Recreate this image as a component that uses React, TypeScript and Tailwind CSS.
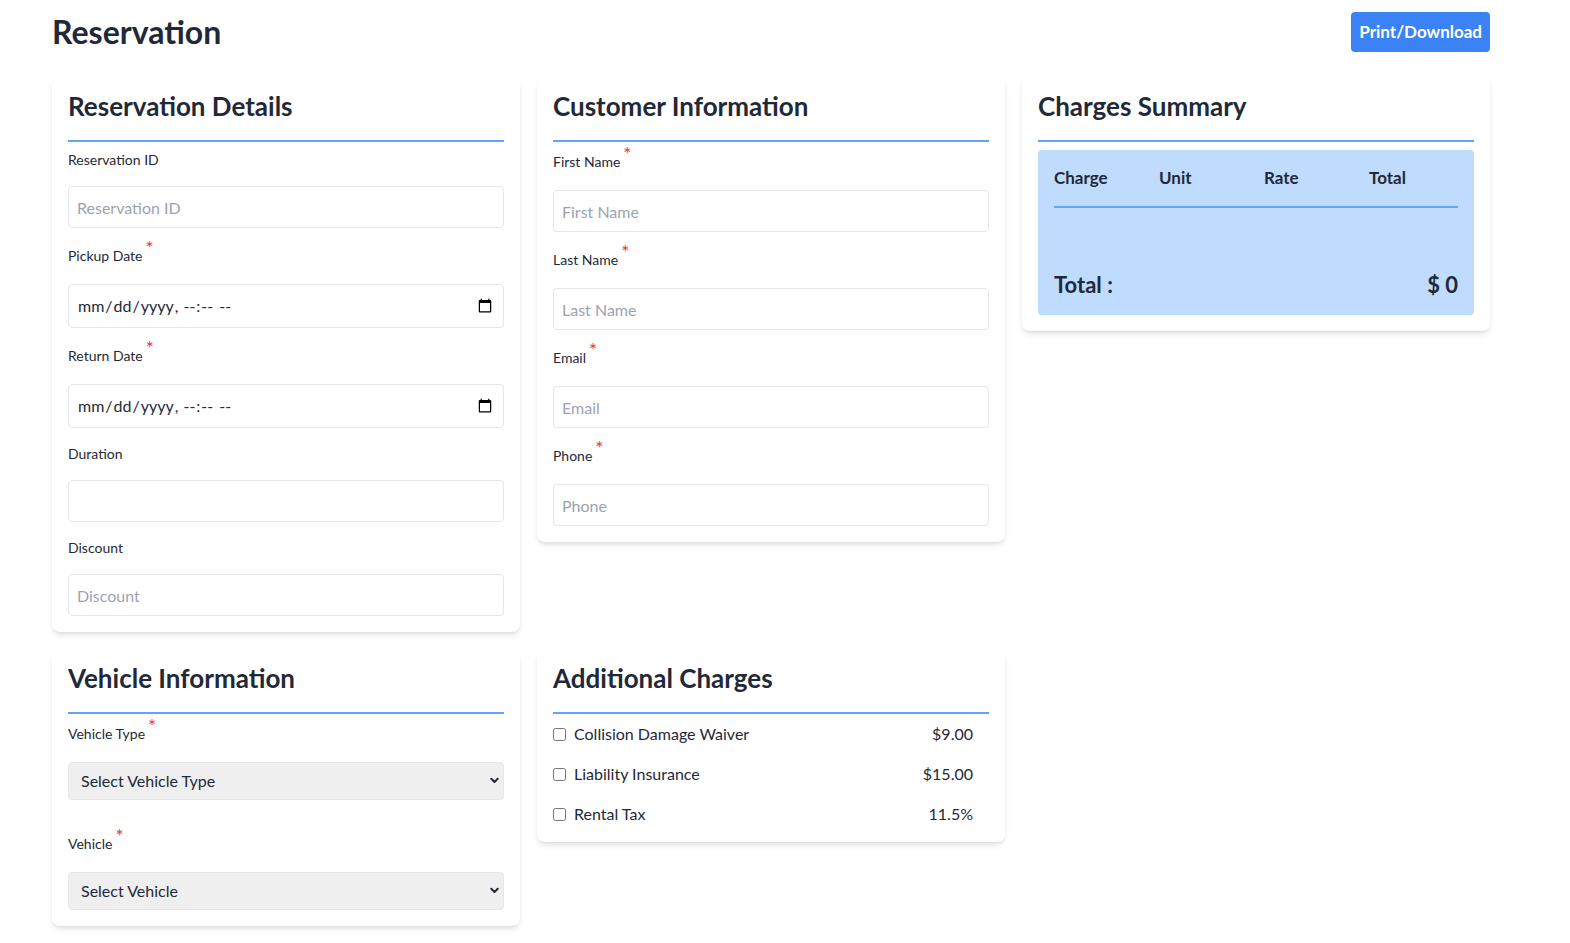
import React from "react";

const Star = () => (
  <span className="relative -top-[6px] ml-[3px] text-[19px] leading-none text-red-500">*</span>
);

function Label({ text, req }: { text: string; req?: boolean }) {
  return (
    <label className={`block text-sm text-[#1f2937] ${req ? "h-6 leading-6" : "leading-5"}`}>
      {text}
      {req && <Star />}
    </label>
  );
}

function TextField({ label, req, placeholder, mt = "mt-4" }: { label: string; req?: boolean; placeholder?: string; mt?: string }) {
  return (
    <div className={mt}>
      <Label text={label} req={req} />
      <input
        type="text"
        placeholder={placeholder}
        className="mt-4 block h-[42px] w-full rounded border border-[#e5e7eb] px-2 text-base text-[#1f2937] placeholder:text-[#9ca3af] outline-none"
      />
    </div>
  );
}

function DateField({ label }: { label: string }) {
  return (
    <div className="mt-4">
      <Label text={label} req />
      <input
        type="datetime-local"
        className="mt-4 block h-[44px] w-full rounded border border-[#e5e7eb] px-2 text-base text-[#1f2937] outline-none"
      />
    </div>
  );
}

function SelectField({ label, value, mt }: { label: string; value: string; mt: string }) {
  return (
    <div className={mt}>
      <Label text={label} req />
      <div className="relative mt-4">
        <select className="block h-[38px] w-full appearance-none rounded border border-[#e5e7eb] bg-[#efefef] px-3 text-base text-[#1f2937] outline-none">
          <option>{value}</option>
        </select>
        <svg className="pointer-events-none absolute right-[5px] top-[15px]" width="9" height="7" viewBox="0 0 9 7">
          <path d="M1.3 1.8 L4.5 5 L7.7 1.8" fill="none" stroke="#1f2937" strokeWidth="2" strokeLinecap="round" strokeLinejoin="round" />
        </svg>
      </div>
    </div>
  );
}

function Card({ title, children }: { title: string; children: React.ReactNode }) {
  return (
    <div className="rounded-lg bg-white px-4 pt-[13px] pb-4 shadow-md">
      <h2 className="border-b-2 border-[#60a5fa] pb-[19px] text-[26px] leading-[30px] font-bold text-[#1f2937]">{title}</h2>
      {children}
    </div>
  );
}

function ChargeRow({ label, price, first }: { label: string; price: string; first?: boolean }) {
  return (
    <div className={`flex h-6 items-center justify-between pr-4 ${first ? "mt-2" : "mt-4"}`}>
      <label className="flex items-center gap-[5px] text-base text-[#1f2937]">
        <input type="checkbox" className="m-0 h-[13px] w-[13px]" />
        <span className="ml-[3px]">{label}</span>
      </label>
      <span className="text-base text-[#1f2937]">{price}</span>
    </div>
  );
}

export default function App() {
  return (
    <div className="min-h-screen bg-white pb-4" style={{ fontFamily: "Lato, 'Noto Sans', sans-serif" }}>
      <div className="ml-[52px] w-[1438px]">
        <div className="mt-3 flex h-[40px] items-center justify-between">
          <h1 className="text-[32px] leading-10 font-bold text-[#1f2937]">Reservation</h1>
          <button className="h-[40px] rounded bg-[#3b82f6] px-2 text-[17px] font-bold text-white">Print/Download</button>
        </div>
        <div className="mt-[26px] grid grid-cols-3 items-start gap-x-[17px] gap-y-[18px]">
          <Card title="Reservation Details">
            <TextField label="Reservation ID" placeholder="Reservation ID" mt="mt-2" />
            <DateField label="Pickup Date" />
            <DateField label="Return Date" />
            <TextField label="Duration" />
            <TextField label="Discount" placeholder="Discount" />
          </Card>
          <Card title="Customer Information">
            <TextField label="First Name" req placeholder="First Name" mt="mt-2" />
            <TextField label="Last Name" req placeholder="Last Name" />
            <TextField label="Email" req placeholder="Email" />
            <TextField label="Phone" req placeholder="Phone" />
          </Card>
          <Card title="Charges Summary">
            <div className="mt-2 rounded bg-[#bfdbfe] p-4 text-[#1f2937]">
              <div className="flex border-b-2 border-[#60a5fa] pb-4 text-[17px] leading-6 font-bold">
                <div className="w-[105px] shrink-0">Charge</div>
                <div className="w-[105px] shrink-0">Unit</div>
                <div className="w-[105px] shrink-0">Rate</div>
                <div className="w-[89px] shrink-0">Total</div>
              </div>
              <div className="mt-[63px] flex items-center justify-between text-[22px] leading-7 font-bold">
                <span>Total :</span>
                <span>$ 0</span>
              </div>
            </div>
          </Card>
          <Card title="Vehicle Information">
            <SelectField label="Vehicle Type" value="Select Vehicle Type" mt="mt-2" />
            <SelectField label="Vehicle" value="Select Vehicle" mt="mt-8" />
          </Card>
          <Card title="Additional Charges">
            <ChargeRow label="Collision Damage Waiver" price="$9.00" first />
            <ChargeRow label="Liability Insurance" price="$15.00" />
            <ChargeRow label="Rental Tax" price="11.5%" />
          </Card>
        </div>
      </div>
    </div>
  );
}
